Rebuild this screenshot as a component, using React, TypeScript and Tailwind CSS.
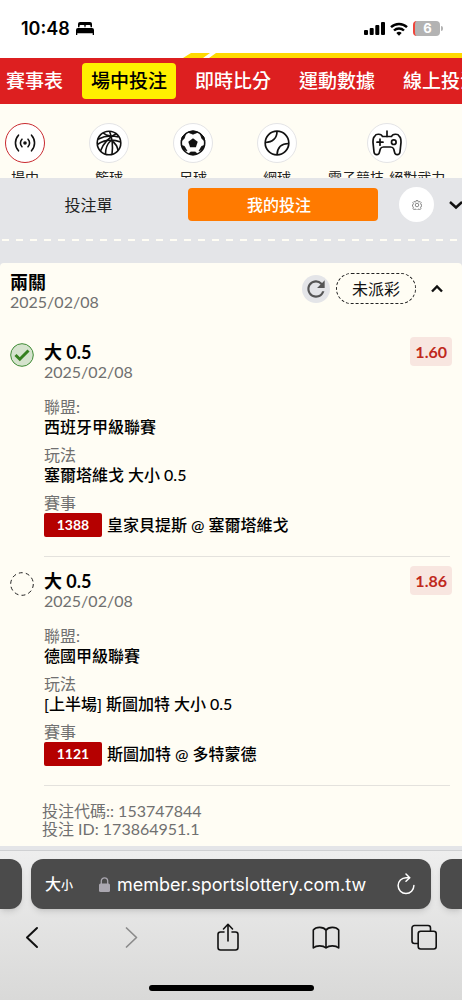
import { ReactNode } from 'react';
import { MdRefresh } from 'react-icons/md';

const navItems = ['賽事表', '場中投注', '即時比分', '運動數據', '線上投注'];

const sports = [
  { name: '場中', icon: <LiveIcon /> },
  { name: '籃球', icon: <BasketballIcon /> },
  { name: '足球', icon: <SoccerIcon /> },
  { name: '網球', icon: <TennisIcon /> },
  { name: '電子競技-絕對武力', icon: <GamepadIcon /> },
];

const selections = [
  {
    code: '1388',
    pick: '大 0.5',
    date: '2025/02/08',
    odds: '1.60',
    league: '西班牙甲級聯賽',
    market: '塞爾塔維戈 大小 0.5',
    match: '皇家貝提斯 @ 塞爾塔維戈',
    won: true,
  },
  {
    code: '1121',
    pick: '大 0.5',
    date: '2025/02/08',
    odds: '1.86',
    league: '德國甲級聯賽',
    market: '[上半場] 斯圖加特 大小 0.5',
    match: '斯圖加特 @ 多特蒙德',
    won: false,
  },
];

function LiveIcon() {
  return (
    <svg width="22" height="20" viewBox="0 0 22 20" fill="none" stroke="#111" strokeWidth="1.6" strokeLinecap="round">
      <circle cx="11" cy="10" r="1.8" fill="#111" stroke="none" />
      <path d="M8 6.2a5.4 5.4 0 0 0 0 7.6M14 6.2a5.4 5.4 0 0 1 0 7.6" />
      <path d="M4.5 2.2a11.5 11.5 0 0 0 0 15.6M17.5 2.2a11.5 11.5 0 0 1 0 15.6" />
    </svg>
  );
}

function BasketballIcon() {
  return (
    <svg width="26" height="26" viewBox="0 0 26 26" fill="none" stroke="#111" strokeWidth="1.6">
      <circle cx="13" cy="13" r="11.8" />
      <path d="M13.5 1.3c3 7 3.500 15 2.500 23.300M2 9.300c6-3.300 14-4 20.500-2.300M1.300 14.500c7-4.500 15.500-5.500 23.300-2.500" />
      <path d="M4.500 21c2.500-7 8-13.500 16-17.500M9.500 24c0-5.500 1.500-10 5.500-13.500M15.500 10.500c3.500 2.500 6 6 6.500 10M7 2.800c2 1.700 4.500 2.700 7.500 3.200" />
    </svg>
  );
}

function SoccerIcon() {
  return (
    <svg width="26" height="26" viewBox="0 0 26 26" fill="#111">
      <circle cx="13" cy="13" r="11.7" fill="none" stroke="#111" strokeWidth="1.6" />
      <path d="M13 8.300l4.700 3.400-1.800 5.500h-5.800l-1.800-5.500z" />
      <path d="M8 2.200l5 2 5-2-5-1.400zM1.200 11l3-2.500 1.500-5L2 7zM1.300 15.500l3 .8 2.700 4.700-3-1.500zM24.800 11l-3-2.500-1.500-5L24 7zM24.700 15.500l-3 .8-2.700 4.700 3-1.500zM9 24l1.500-2h5l1.500 2-4 1z" stroke="#111" strokeWidth="0.8" strokeLinejoin="round" />
    </svg>
  );
}

function TennisIcon() {
  return (
    <svg width="26" height="26" viewBox="0 0 26 26" fill="none" stroke="#111" strokeWidth="1.7">
      <circle cx="13" cy="13" r="11.8" />
      <path d="M13 1.200c0 7-4.500 11.300-11.600 11.300M24.700 13.500c-7 0-11.300 4-11.700 11.300" />
    </svg>
  );
}

function GamepadIcon() {
  return (
    <svg width="30" height="26" viewBox="0 0 30 26" fill="none" stroke="#111" strokeWidth="1.7" strokeLinecap="round" strokeLinejoin="round">
      <path d="M15 1v5.500" />
      <path d="M10.500 6.500C9.500 3.800 4 3.300 2.800 6.200C0.800 7.500 1 10 1 12.500L2 22C2.500 25.500 7 25.500 7.500 22L8.300 19C8.800 17.500 10 17 11.500 17H18.500C20 17 21.200 17.500 21.700 19L22.500 22C23 25.500 27.500 25.500 28 22L29 12.500C29 10 29.200 7.500 27.200 6.200C26 3.300 20.500 3.800 19.500 6.500Z" />
      <path d="M8 9.200v6M5 12.200h6" />
      <circle cx="21.800" cy="12.200" r="2.300" />
    </svg>
  );
}

function GearIcon() {
  return (
    <svg width="10" height="10" viewBox="0 0 20 20" fill="none" stroke="#666" strokeWidth="1.5">
      <path d="M8.300 1h3.400l.6 2.500 1.500.7 2.300-1.300 2.300 2.400-1.300 2.200.6 1.500 1.800.5v3l-1.800.6-.7 1.600 1.300 2.200-2.400 2.300-2.200-1.200-1.500.6-.6 1.700H8.300l-.6-1.700-1.500-.6-2.200 1.200-2.400-2.300 1.300-2.200-.7-1.600L1 12.500v-3L2.400 9 3 7.500 1.700 5.300 4 2.900l2.300 1.300 1.500-.7z" />
      <circle cx="10" cy="10" r="3.5" />
    </svg>
  );
}

function StatusBar() {
  return (
    <div className="flex h-[53px] items-center justify-between bg-white pt-1 pr-[19px] pl-[21px] text-black">
      <div className="flex items-center gap-[6px] font-['Inter',sans-serif] text-[18px] font-semibold">
        <span>10:48</span>
        <svg width="18" height="13" viewBox="0 0 18 13" fill="currentColor">
          <path d="M2 5.200V2a2 2 0 0 1 2-2h10a2 2 0 0 1 2 2v3.200h-1.500V4a1 1 0 0 0-1-1h-3a1 1 0 0 0-1 1v1.200h-1V4a1 1 0 0 0-1-1h-3a1 1 0 0 0-1 1v1.200z" />
          <path d="M2 6h14a2 2 0 0 1 2 2v5h-1.300v-1.800H1.300V13H0V8a2 2 0 0 1 2-2z" />
        </svg>
      </div>
      <div className="flex items-center gap-[5px]">
        <svg width="21" height="13" viewBox="0 0 21 13" fill="currentColor">
          <rect x="0" y="8" width="4" height="5" rx="1" />
          <rect x="5.700" y="6" width="4" height="7" rx="1" />
          <rect x="11.300" y="3" width="4" height="10" rx="1" />
          <rect x="17" y="0" width="4" height="13" rx="1" />
        </svg>
        <svg width="18" height="14" viewBox="0 0 18 14" fill="none" stroke="currentColor" strokeWidth="2.4">
          <path d="M1 5.200a11.500 11.500 0 0 1 16 0" />
          <path d="M4 8.500a7.200 7.200 0 0 1 10 0" />
          <path d="M9 13.700l-2.700-2.800a4 4 0 0 1 5.400 0z" fill="currentColor" stroke="none" />
        </svg>
        <div className="flex items-center gap-[1px]">
          <div className="h-[15px] w-[27px] overflow-hidden rounded-[4px] border-l-2 border-[#f0453a] bg-[#b3b3b3] text-center font-['Inter',sans-serif] text-[13px] leading-[15px] font-bold text-white">
            6
          </div>
          <div className="h-[5px] w-[2px] rounded-r-full bg-[#b3b3b3]" />
        </div>
      </div>
    </div>
  );
}

function SiteNav() {
  return (
    <header>
      <div className="flex h-[5px] bg-white">
        <div className="w-[39%] shrink-0" />
        <svg width="40" height="5" viewBox="0 0 40 5" fill="#ffd900" className="shrink-0">
          <path d="M11 0h19l-7 5H3zM36 0h4v5H29z" />
        </svg>
        <div className="flex-1 bg-[#ffd900]" />
      </div>
      <nav className="overflow-hidden bg-[#dd1f20] py-[5px]">
        <div className="-ml-[3px] flex gap-[10px]">
          {navItems.map((item) => (
            <a
              key={item}
              href="#"
              className={
                item === '場中投注'
                  ? 'h-9 shrink-0 rounded-[4px] bg-[#fff000] px-[9px] text-[19px] leading-9 font-medium text-black'
                  : 'h-9 shrink-0 px-[9px] text-[19px] leading-9 font-medium text-white'
              }
            >
              {item}
            </a>
          ))}
        </div>
      </nav>
    </header>
  );
}

function SportsRow() {
  return (
    <div className="h-[74px] overflow-hidden bg-[#fffdf4] pt-[19px]">
      <div className="-ml-2 flex gap-[18px]">
        {sports.map((sport, index) => (
          <a key={sport.name} href="#" className="flex min-w-[66px] shrink-0 flex-col items-center gap-[5px] text-[#222]">
            <span
              className={
                index === 0
                  ? 'flex size-10 items-center justify-center rounded-full border border-[#c92a2f] bg-white'
                  : 'flex size-10 items-center justify-center rounded-full border border-[#e4e4e6] bg-white'
              }
            >
              {sport.icon}
            </span>
            <span className="text-[14px] leading-5 whitespace-nowrap">{sport.name}</span>
          </a>
        ))}
      </div>
    </div>
  );
}

function SlipTabs() {
  return (
    <div className="overflow-hidden bg-[#e4e5e8] pt-[9px] pb-[22px]">
      <div className="-ml-[2px] flex items-center">
        <div className="grid flex-1 grid-cols-2">
          <button className="h-[33px] pr-[9px] text-[16px] text-[#222]">投注單</button>
          <button className="h-[33px] rounded-[4px] bg-[#ff7a00] pr-2 text-[16px] font-medium text-white">我的投注</button>
        </div>
        <button aria-label="設定" className="ml-[21px] flex size-[35px] items-center justify-center rounded-full bg-white">
          <GearIcon />
        </button>
        <button aria-label="收合" className="ml-[15px] w-[13px] shrink-0 overflow-hidden">
          <svg width="14" height="10" viewBox="0 0 14 10" fill="none" stroke="#111" strokeWidth="2.4">
            <path d="M1 2l6 5.500L13 2" />
          </svg>
        </button>
      </div>
      <div className="mt-[17px] ml-[2px] h-[2px] bg-[repeating-linear-gradient(90deg,#fffdf4_0_7px,transparent_7px_14px)]" />
    </div>
  );
}

function Field({ label, children }: { label: string; children: ReactNode }) {
  return (
    <div>
      <dt className="leading-5 text-[#707070]">{label}</dt>
      <dd className="leading-5 font-medium text-black">{children}</dd>
    </div>
  );
}

function Selection({ item }: { item: (typeof selections)[number] }) {
  return (
    <div className="flex gap-[10px]">
      <svg width="24" height="24" viewBox="0 0 24 24" fill="none" className="shrink-0">
        {item.won ? (
          <>
            <circle cx="12" cy="12" r="11.3" fill="#d5e3cd" stroke="#3f8b35" />
            <path d="M5.500 12l4.300 4.200L18.500 7.500" stroke="#35801f" strokeWidth="3" />
          </>
        ) : (
          <circle cx="12" cy="12" r="11.3" stroke="#222" strokeDasharray="4 3.100" />
        )}
      </svg>
      <div className="flex-1 border-b border-[#e4e2dd] pb-[19px]">
        <div className="flex items-start justify-between">
          <div>
            <h3 className="text-[18px] leading-[19px] font-bold text-black">{item.pick}</h3>
            <p className="leading-[19px] text-[#707070]">{item.date}</p>
          </div>
          <span className="-mt-[6px] -mr-[2px] rounded-[4px] bg-[#f8e6e0] px-[5px] leading-[29px] font-bold text-[#c0291d]">
            {item.odds}
          </span>
        </div>
        <dl className="mt-4 flex flex-col gap-2">
          <Field label="聯盟:">{item.league}</Field>
          <Field label="玩法">{item.market}</Field>
          <Field label="賽事">
            <span className="flex items-center gap-[5px]">
              <span className="w-[58px] rounded-[2px] bg-[#b50000] text-center text-[14px] leading-6 font-bold text-white">
                {item.code}
              </span>
              {item.match}
            </span>
          </Field>
        </dl>
      </div>
    </div>
  );
}

function BetCard() {
  return (
    <section className="rounded-t-[4px] bg-[#fffdf4] pt-[10px] pb-2 pl-[10px]">
      <div className="flex items-start justify-between pr-[19px]">
        <div>
          <h2 className="text-[18px] leading-[19px] font-bold text-black">兩關</h2>
          <p className="leading-[19px] text-[#707070]">2025/02/08</p>
        </div>
        <div className="flex items-center">
          <button aria-label="重新整理" className="flex size-7 items-center justify-center rounded-full bg-[#e4e5e8] text-[#555]">
            <MdRefresh size={26} />
          </button>
          <button className="ml-[6px] h-[31px] w-20 rounded-full border border-dashed border-[#222] text-[#111]">未派彩</button>
          <button aria-label="收合注單" className="ml-[15px]">
            <svg width="12" height="9" viewBox="0 0 12 9" fill="none" stroke="#111" strokeWidth="2.4">
              <path d="M1 7.500l5-5 5 5" />
            </svg>
          </button>
        </div>
      </div>
      <div className="mt-8 flex flex-col gap-[15px] pr-3">
        {selections.map((item) => (
          <Selection key={item.code} item={item} />
        ))}
      </div>
      <div className="mt-4 pl-8 leading-[18px] text-[#707070]">
        <p>投注代碼:: 153747844</p>
        <p>投注 ID: 173864951.1</p>
      </div>
    </section>
  );
}

function BrowserBar() {
  return (
    <footer className="border-t border-[#cfd0d2] bg-linear-to-b from-[#eeeeee] to-[#d9d9d8] pt-2">
      <div className="flex gap-[9px]">
        <div className="h-[50px] w-[22px] rounded-r-[12px] bg-[#4b4b4b] shadow-md" />
        <div className="flex h-[50px] flex-1 items-center rounded-[12px] bg-[#4b4b4b] pr-4 pl-[14px] text-white shadow-md">
          <button className="flex items-baseline font-medium">
            <span className="text-[16px]">大</span>
            <span className="text-[12px]">小</span>
          </button>
          <div className="flex flex-1 items-center justify-center gap-[7px] pr-[5px]">
            <svg width="11" height="15" viewBox="0 0 11 15" fill="#aaa7b0">
              <rect x="0" y="6.500" width="11" height="8.500" rx="1.500" />
              <path d="M2.300 7V4a3.200 3.200 0 0 1 6.400 0v3" fill="none" stroke="#aaa7b0" strokeWidth="1.3" />
            </svg>
            <span className="font-['Inter',sans-serif] text-[18px]">member.sportslottery.com.tw</span>
          </div>
          <button aria-label="重新載入">
            <svg width="18" height="22" viewBox="0 0 18 22" fill="none" stroke="currentColor" strokeWidth="1.5" strokeLinecap="round" strokeLinejoin="round">
              <path d="M12.500 4.700H9a7.900 7.900 0 1 0 7.900 7.900" />
              <path d="M9 1l3.700 3.700L9 8.300" />
            </svg>
          </button>
        </div>
        <div className="h-[50px] w-[22px] rounded-l-[12px] bg-[#4b4b4b] shadow-md" />
      </div>
      <div className="mt-[14px] flex items-center justify-between pr-6 pl-[18px] text-[#111]">
        <button aria-label="上一頁" className="flex w-7 justify-center">
          <svg width="24" height="28" viewBox="0 0 24 28" fill="none" stroke="currentColor" strokeWidth="2" strokeLinecap="round" strokeLinejoin="round">
            <path d="M17 5L7 14.500 17 24" />
          </svg>
        </button>
        <button aria-label="下一頁" className="flex w-7 justify-center text-[#8b8b8b]">
          <svg width="24" height="28" viewBox="0 0 24 28" fill="none" stroke="currentColor" strokeWidth="1.7" strokeLinecap="round" strokeLinejoin="round">
            <path d="M8.500 5l10 9.500-10 9.500" />
          </svg>
        </button>
        <button aria-label="分享" className="flex w-7 justify-center">
          <svg width="24" height="28" viewBox="0 0 24 28" fill="none" stroke="currentColor" strokeWidth="1.6" strokeLinecap="round" strokeLinejoin="round">
            <path d="M8 9H4.500A2.500 2.500 0 0 0 2 11.500v13A2.500 2.500 0 0 0 4.500 27h15a2.500 2.500 0 0 0 2.500-2.500v-13A2.500 2.500 0 0 0 19.500 9H16" />
            <path d="M12 18V1.500M7.500 6L12 1.300 16.500 6" />
          </svg>
        </button>
        <button aria-label="書籤" className="flex w-7 justify-center">
          <svg width="28" height="28" viewBox="0 0 28 28" fill="none" stroke="currentColor" strokeWidth="1.6" strokeLinejoin="round">
            <path d="M14 7.200C11.500 3.500 4 3.500 1.300 7v18c3-2.800 9.700-2.800 12.700 0 3-2.800 9.700-2.800 12.700 0V7C24 3.500 16.500 3.500 14 7.200zM14 7.200V25" />
          </svg>
        </button>
        <button aria-label="分頁" className="flex w-7 justify-center">
          <svg width="26" height="28" viewBox="0 0 26 28" fill="none" stroke="currentColor" strokeWidth="1.6" strokeLinejoin="round">
            <rect x="7.200" y="8.300" width="18" height="17.700" rx="2.500" />
            <path d="M7 20.500H3.500A2.500 2.500 0 0 1 1 18V5a2.500 2.500 0 0 1 2.500-2.500H17A2.500 2.500 0 0 1 19.500 5v3" />
          </svg>
        </button>
      </div>
      <div className="pt-[34px] pb-[9px]">
        <div className="mx-auto h-[6px] w-[165px] rounded-full bg-black" />
      </div>
    </footer>
  );
}

export default function App() {
  return (
    <div className="bg-[#e4e5e8] font-['Lato','Noto_Sans_CJK_TC',sans-serif] text-[16px]">
      <StatusBar />
      <SiteNav />
      <SportsRow />
      <SlipTabs />
      <main className="pb-1">
        <BetCard />
      </main>
      <BrowserBar />
    </div>
  );
}
